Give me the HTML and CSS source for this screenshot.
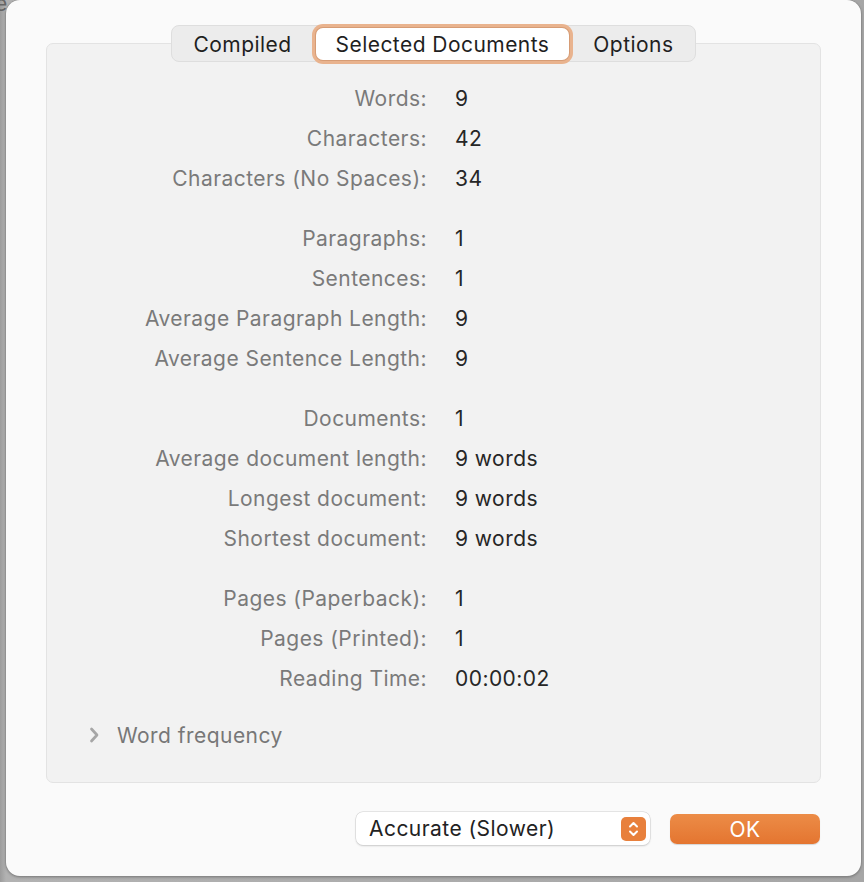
FILE: index.html
```html
<!DOCTYPE html>
<html>
<head>
<meta charset="utf-8">
<link rel="stylesheet" href="styles.css">
</head>
<body>
<div class="backdrop-letter">e</div>
<div class="window">
  <div class="content">
    <div class="tabs">
      <div class="seg">
        <div class="tab">Compiled</div>
        <div class="tab selected">Selected Documents</div>
        <div class="tab">Options</div>
      </div>
    </div>
    <div class="panel">
      <div class="group">
        <div class="label">Words:</div><div class="value">9</div>
        <div class="label">Characters:</div><div class="value">42</div>
        <div class="label">Characters (No Spaces):</div><div class="value">34</div>
      </div>
      <div class="group">
        <div class="label">Paragraphs:</div><div class="value">1</div>
        <div class="label">Sentences:</div><div class="value">1</div>
        <div class="label">Average Paragraph Length:</div><div class="value">9</div>
        <div class="label">Average Sentence Length:</div><div class="value">9</div>
      </div>
      <div class="group">
        <div class="label">Documents:</div><div class="value">1</div>
        <div class="label">Average document length:</div><div class="value">9 words</div>
        <div class="label">Longest document:</div><div class="value">9 words</div>
        <div class="label">Shortest document:</div><div class="value">9 words</div>
      </div>
      <div class="group">
        <div class="label">Pages (Paperback):</div><div class="value">1</div>
        <div class="label">Pages (Printed):</div><div class="value">1</div>
        <div class="label">Reading Time:</div><div class="value">00:00:02</div>
      </div>
      <div class="disclosure">
        <svg class="chev" width="12" height="16" viewBox="0 0 12 16"><path d="M3.5 2 L9 8 L3.5 14" fill="none" stroke="#a6a6a6" stroke-width="2.7" stroke-linecap="round" stroke-linejoin="round"/></svg>
        <span>Word frequency</span>
      </div>
    </div>
    <div class="footer">
      <div class="popup">
        <span>Accurate (Slower)</span>
        <div class="stepper">
          <svg width="25" height="24" viewBox="0 0 25 24"><path d="M9 9.5 L12.5 6 L16 9.5 M9 14.5 L12.5 18 L16 14.5" fill="none" stroke="#fff" stroke-width="2" stroke-linecap="round" stroke-linejoin="round"/></svg>
        </div>
      </div>
      <div class="ok">OK</div>
    </div>
  </div>
</div>
</body>
</html>
```
FILE: styles.css
```css
html, body {
  margin: 0;
  padding: 0;
}
body {
  width: 864px;
  height: 882px;
  overflow: hidden;
  background: linear-gradient(to right, #9c9c9c 0px, #b2b2b2 6px, #a6a6a6 864px);
  font-family: Inter, "Noto Sans", sans-serif;
  position: relative;
}
.backdrop-letter {
  position: absolute;
  left: -5px;
  top: -9px;
  font-size: 22px;
  color: #666;
  font-family: "Liberation Sans", sans-serif;
}
.window {
  position: relative;
  margin-left: 6px;
  width: 855px;
  height: 876px;
  background: #fafafa;
  border-radius: 14px;
  box-shadow: 0 0 0 0.5px #8a8a8a, 0 1px 3px rgba(0,0,0,0.35);
}
.content {
  padding-top: 25px;
  margin-left: 40px;
  width: 775px;
}
.tabs {
  display: flex;
  justify-content: center;
  position: relative;
  z-index: 1;
}
.seg {
  display: flex;
  align-items: center;
  height: 35px;
  padding: 0 2px;
  background: #ececec;
  border: 1px solid #dedede;
  border-radius: 8px;
}
.tab {
  font-size: 21px;
  letter-spacing: 0.45px;
  color: #1f1f1f;
  padding: 0 20px;
  height: 35px;
  line-height: 37px;
}
.tab.selected {
  background: #fff;
  border-radius: 7px;
  height: 32px;
  line-height: 34px;
  box-shadow: 0 0 0 1px #d69c75, 0 0 0 4px #e9b38e;
  margin: 0 4px;
}
.panel {
  margin-top: -19px;
  height: 740px;
  box-sizing: border-box;
  background: #f2f2f2;
  border: 1px solid #e3e3e3;
  border-radius: 7px;
  padding-top: 35px;
}
.group {
  display: grid;
  grid-template-columns: 380px auto;
  column-gap: 28px;
  margin-bottom: 20px;
}
.label, .value {
  font-size: 21px;
  letter-spacing: 0.45px;
  line-height: 40px;
  height: 40px;
}
.label {
  text-align: right;
  color: #7a7a7a;
}
.value {
  color: #262626;
}
.disclosure {
  display: flex;
  align-items: center;
  height: 40px;
  margin-top: -4px;
  padding-left: 41px;
  font-size: 21px;
  letter-spacing: 0.45px;
  color: #777;
}
.chev {
  margin-right: 17px;
}
.footer {
  display: flex;
  justify-content: flex-end;
  align-items: center;
  margin-top: 29px;
  gap: 20px;
}
.popup {
  width: 294px;
  height: 33px;
  box-sizing: border-box;
  background: #fff;
  border-radius: 7px;
  box-shadow: 0 0 0 0.5px #cfcfcf, 0 1px 2px rgba(0,0,0,0.18);
  display: flex;
  align-items: center;
  justify-content: space-between;
  padding: 0 4px 0 13px;
  font-size: 21px;
  letter-spacing: 0.45px;
  color: #222;
}
.stepper {
  width: 25px;
  height: 24px;
  background: #e8803c;
  border-radius: 5px;
  display: flex;
}
.ok {
  width: 150px;
  height: 30px;
  line-height: 31px;
  text-align: center;
  color: #fff;
  font-size: 21px;
  letter-spacing: 0.45px;
  background: linear-gradient(to bottom, #ec8c47, #e47530);
  border-radius: 7px;
  box-shadow: 0 1px 1px rgba(0,0,0,0.15);
  margin-right: 1px;
}
```
